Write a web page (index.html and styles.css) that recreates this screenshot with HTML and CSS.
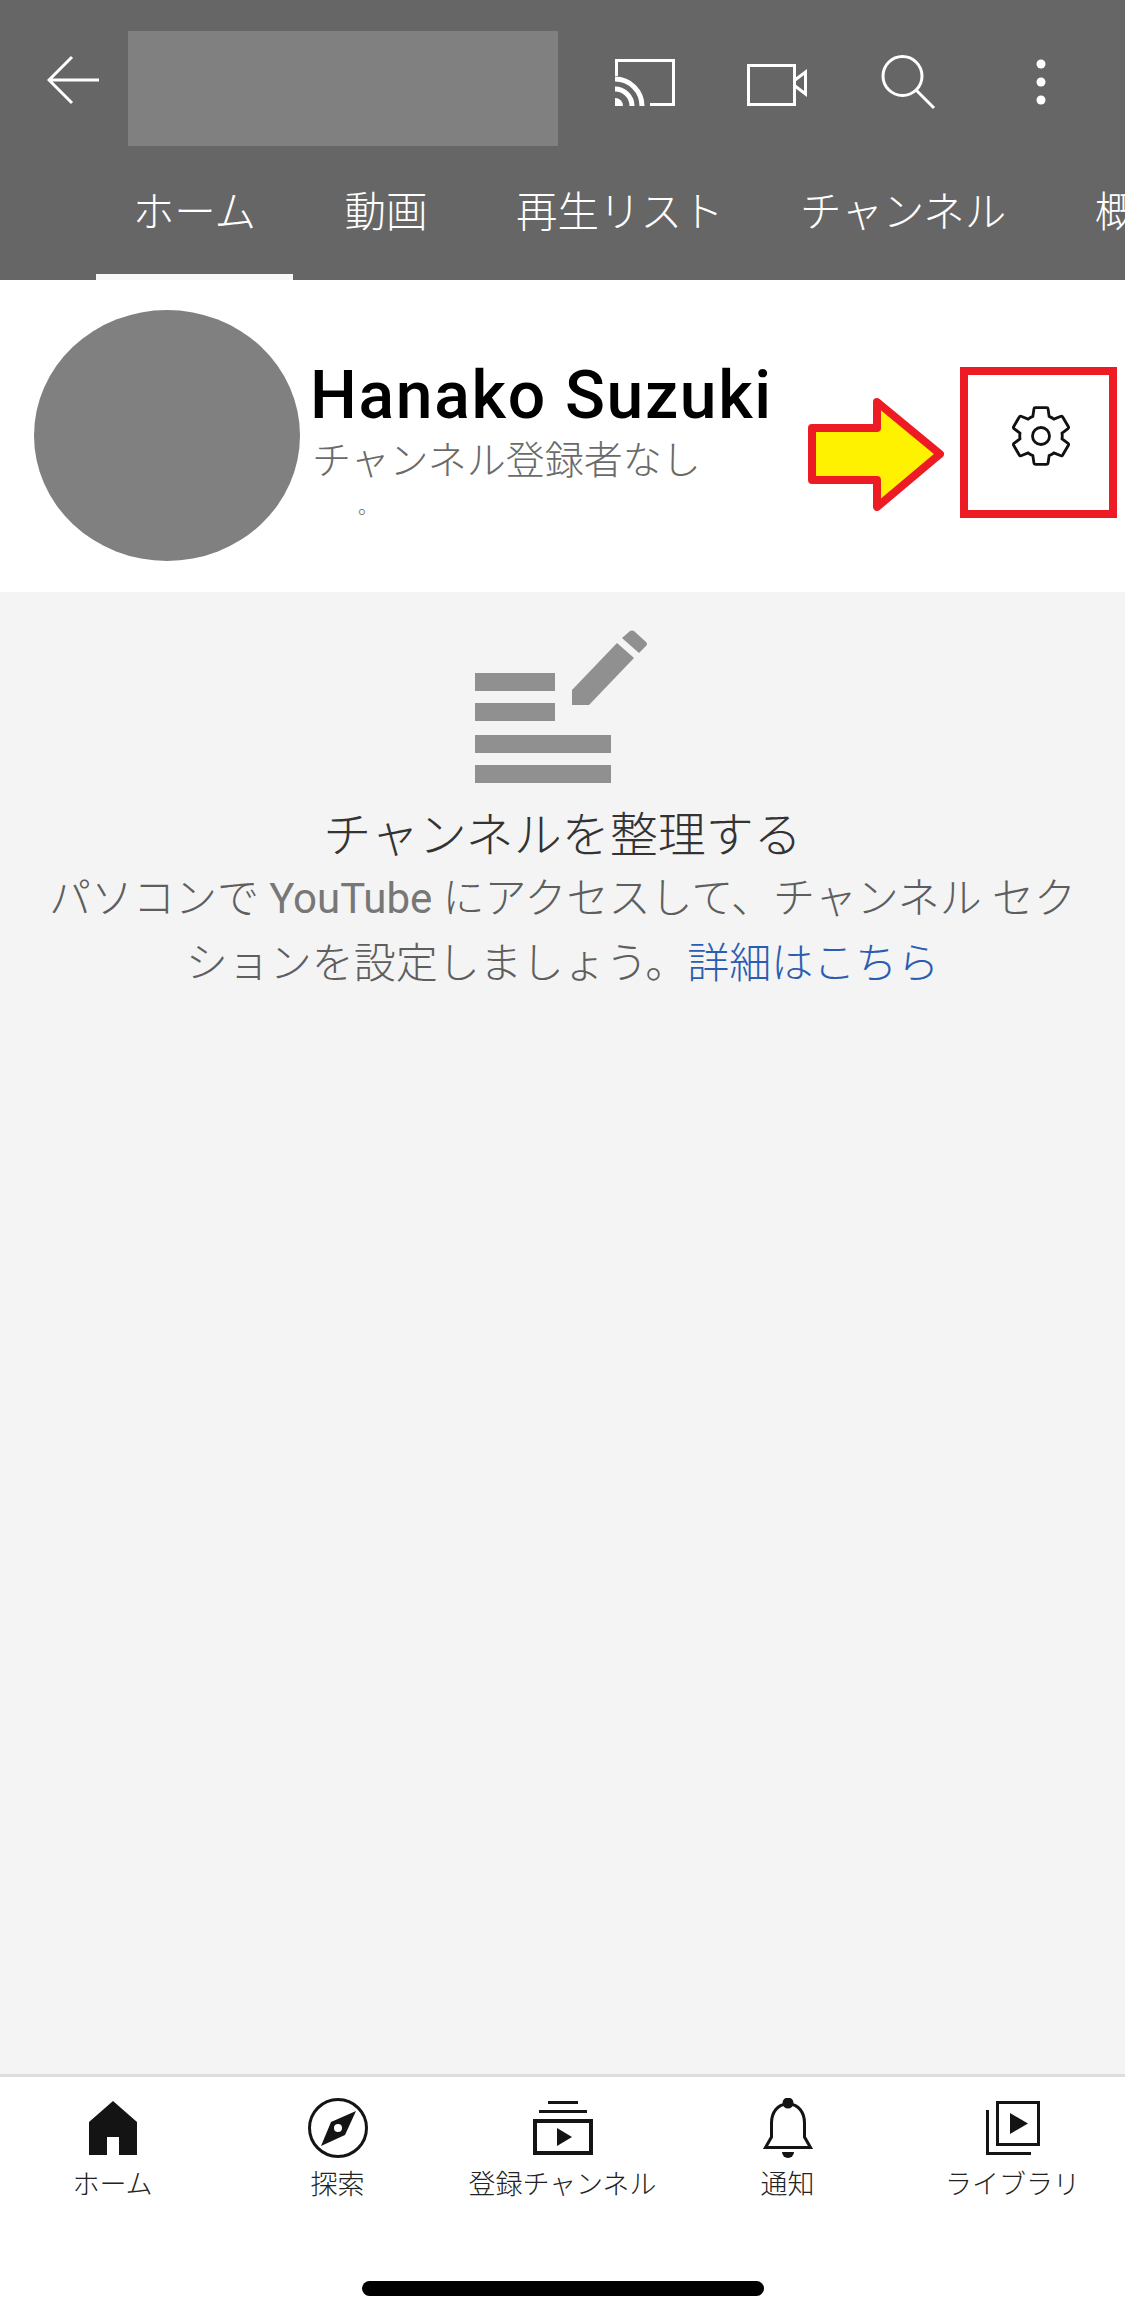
FILE: index.html
```html
<!DOCTYPE html>
<html lang="ja">
<head>
    <meta charset="UTF-8">
    <title>Hanako Suzuki</title>
    <link rel="stylesheet" href="styles.css">
</head>
<body>
    <header class="top">
        <div class="toolbar">
            <svg class="icon" viewBox="0 0 60 60"><path class="line" d="M52 28H2M25 5L2 28L25 51"/></svg>
            <div class="logo"></div>
            <div class="actions">
                <svg class="icon" viewBox="0 0 60 60">
                    <path class="line" d="M1.5 24V8.5H58.5V52.5H35"/>
                    <path class="line wave" d="M0 27A27 27 0 0 1 27 54M0 37A17 17 0 0 1 17 54"/>
                    <path class="solid" d="M0 46A8 8 0 0 1 8 54H0Z"/>
                </svg>
                <svg class="icon" viewBox="0 0 60 60">
                    <path class="line" d="M1.5 13.5H47.5V52.5H1.5ZM48 28L58.5 20V42L48 34"/>
                </svg>
                <svg class="icon" viewBox="0 0 60 60">
                    <circle class="line" cx="23.5" cy="24" r="19.5"/>
                    <path class="line" d="M37 38L55 56"/>
                </svg>
                <svg class="icon" viewBox="0 0 60 60">
                    <circle class="solid" cx="30" cy="12" r="4.5"/>
                    <circle class="solid" cx="30" cy="30" r="4.5"/>
                    <circle class="solid" cx="30" cy="48" r="4.5"/>
                </svg>
            </div>
        </div>
        <nav class="tabs">
            <div class="tab active">ホーム</div>
            <div class="tab">動画</div>
            <div class="tab">再生リスト</div>
            <div class="tab tab-tight">チャンネル</div>
            <div class="tab">概要</div>
        </nav>
    </header>

    <section class="channel">
        <div class="avatar"></div>
        <div class="channel-text">
            <div class="channel-name">Hanako Suzuki</div>
            <div class="channel-subs">チャンネル登録者なし</div>
            <div class="channel-dot">。</div>
        </div>
        <svg class="gear" viewBox="0 0 24 24">
            <path d="M19.43 12.98c.04-.32.07-.64.07-.98s-.03-.66-.07-.98l2.11-1.65c.19-.15.24-.42.12-.64l-2-3.46c-.12-.22-.39-.3-.61-.22l-2.49 1c-.52-.4-1.08-.73-1.69-.98l-.38-2.65C14.46 2.18 14.25 2 14 2h-4c-.25 0-.46.18-.49.42l-.38 2.65c-.61.25-1.17.59-1.69.98l-2.49-1c-.23-.09-.49 0-.61.22l-2 3.46c-.13.22-.07.49.12.64l2.11 1.65c-.04.32-.07.65-.07.98s.03.66.07.98l-2.11 1.65c-.19.15-.24.42-.12.64l2 3.46c.12.22.39.3.61.22l2.49-1c.52.4 1.08.73 1.69.98l.38 2.65c.03.24.24.42.49.42h4c.25 0 .46-.18.49-.42l.38-2.65c.61-.25 1.17-.59 1.69-.98l2.49 1c.23.09.49 0 .61-.22l2-3.46c.12-.22.07-.49-.12-.64l-2.11-1.65z"/>
            <circle cx="12" cy="12" r="3"/>
        </svg>
        <!-- annotation drawn on top of the screenshot -->
        <svg class="callout-arrow" viewBox="0 0 136 113"><path d="M4 30H69V4L132 56L69 109V82H4Z"/></svg>
        <div class="callout-box"></div>
    </section>

    <main class="empty">
        <svg class="empty-icon" viewBox="0 0 175 160">
            <rect x="0" y="48" width="80" height="18"/>
            <rect x="0" y="78" width="80" height="18"/>
            <rect x="0" y="110" width="136" height="18"/>
            <rect x="0" y="140" width="136" height="18"/>
            <path d="M97 65L142 18L159 33L114 80H97Z"/>
            <path d="M147 13L155 6Q157 5 159 6L171 17Q173 19 171 21L164 28Z"/>
        </svg>
        <h2 class="empty-title">チャンネルを整理する</h2>
        <p class="empty-text">パソコンで <span class="latin">YouTube</span> にアクセスして、チャンネル セク<br>ションを設定しましょう。<a href="#">詳細はこちら</a></p>
    </main>

    <footer class="bottom">
        <div class="nav-items">
            <div class="nav-item">
                <svg class="icon" viewBox="0 0 60 60"><path class="dark" d="M30 3L54 24V57H36V39H24V57H6V24Z"/></svg>
                <span>ホーム</span>
            </div>
            <div class="nav-item">
                <svg class="icon" viewBox="0 0 60 60">
                    <circle class="dark-line" cx="30" cy="30" r="28.5"/>
                    <path class="dark" d="M48 13L23 24L13 48L37 37Z"/>
                    <circle class="hole" cx="30" cy="30" r="4"/>
                </svg>
                <span>探索</span>
            </div>
            <div class="nav-item">
                <svg class="icon" viewBox="0 0 60 60">
                    <rect class="dark" x="15" y="3" width="30" height="3"/>
                    <rect class="dark" x="6" y="12" width="48" height="3"/>
                    <rect class="dark-line thick" x="2" y="23" width="56" height="32"/>
                    <path class="dark" d="M24 30L39 39L24 48Z"/>
                </svg>
                <span>登録チャンネル</span>
            </div>
            <div class="nav-item">
                <svg class="icon" viewBox="0 0 60 60">
                    <path class="dark-line" d="M30 6C19 6 13.5 15 13.5 25V39L7.5 49.5H52.5L46.5 39V25C46.5 15 41 6 30 6Z"/>
                    <circle class="dark" cx="30" cy="5" r="5.5"/>
                    <path class="dark" d="M24 54H36A6 6 0 0 1 24 54Z"/>
                </svg>
                <span>通知</span>
            </div>
            <div class="nav-item">
                <svg class="icon" viewBox="0 0 60 60">
                    <rect class="dark-line" x="14.5" y="4.5" width="41" height="42"/>
                    <path class="dark-line" d="M4.5 12V55.5H48"/>
                    <path class="dark" d="M27 15L45 25.5L27 36Z"/>
                </svg>
                <span>ライブラリ</span>
            </div>
        </div>
        <div class="home-bar"></div>
    </footer>
</body>
</html>
```

FILE: styles.css
```css
body {
    margin: 0;
    width: 1125px;
    height: 2319px;
    overflow: hidden;
    display: flex;
    flex-direction: column;
    background-color: #f4f4f4;
    font-family: Roboto, "Noto Sans CJK JP", sans-serif;
    font-weight: 300;
}
.icon {
    display: block;
    width: 60px;
    height: 60px;
    flex: none;
}
.line {
    fill: none;
    stroke: white;
    stroke-width: 3;
}
.wave {
    stroke-width: 5;
}
.solid {
    fill: white;
}

/* header */
.top {
    background-color: #666666;
    color: white;
    height: 280px;
    flex: none;
}
.toolbar {
    display: flex;
    align-items: center;
    height: 177px;
    padding-left: 47px;
}
.toolbar > .icon {
    margin-bottom: 13px;
}
.logo {
    width: 430px;
    height: 115px;
    margin-left: 21px;
    background-color: #808080;
}
.actions {
    display: flex;
    gap: 72px;
    margin-left: 57px;
    margin-bottom: 13px;
}
.tabs {
    display: flex;
    gap: 15px;
    margin-left: 96px;
    overflow: hidden;
}
.tab {
    box-sizing: border-box;
    height: 103px;
    padding: 0 36.75px;
    font-size: 41.5px;
    line-height: 72px;
    white-space: nowrap;
    border-bottom: 6px solid transparent;
}
.tab.active {
    border-bottom-color: #f8f8f8;
}
.tab-tight {
    margin-left: -12px;
}

/* channel */
.channel {
    position: relative;
    display: flex;
    align-items: center;
    height: 312px;
    flex: none;
    background-color: white;
}
.avatar {
    width: 266px;
    height: 251px;
    margin-left: 34px;
    margin-bottom: 1px;
    border-radius: 50%;
    background-color: #808080;
    flex: none;
}
.channel-text {
    align-self: flex-start;
    margin-left: 10px;
    padding-top: 81px;
}
.channel-name {
    font-weight: 500;
    font-size: 66px;
    line-height: 70px;
    letter-spacing: 1.7px;
    color: black;
}
.channel-subs {
    margin-left: 2px;
    font-size: 39px;
    line-height: 60px;
    color: #6a6a6a;
}
.channel-dot {
    margin-left: 48px;
    font-size: 20px;
    line-height: 32px;
    color: #6a6a6a;
}
.gear {
    width: 68px;
    height: 68px;
    margin-left: auto;
    margin-right: 50px;
    fill: none;
    stroke: #111111;
    stroke-width: 1;
}
.callout-arrow {
    position: absolute;
    left: 808px;
    top: 118px;
    width: 136px;
    height: 113px;
    fill: #fff200;
    stroke: #ed1c24;
    stroke-width: 8;
    stroke-linejoin: round;
}
.callout-box {
    position: absolute;
    left: 960px;
    top: 87px;
    width: 157px;
    height: 151px;
    box-sizing: border-box;
    border: 8px solid #ed1c24;
}

/* empty state */
.empty {
    flex: 1;
    padding-top: 33px;
    text-align: center;
}
.empty-icon {
    display: block;
    width: 175px;
    height: 160px;
    margin: 0 auto;
    fill: #909090;
}
.empty-title {
    margin: 21px 0 0;
    font-size: 48px;
    font-weight: 300;
    line-height: 60px;
    color: #333333;
}
.empty-text {
    margin: 0;
    font-size: 42px;
    line-height: 65px;
    color: #5e5e5e;
}
.latin {
    font-weight: 400;
    color: #777777;
}
.empty-text a {
    color: #2a5db0;
    text-decoration: none;
}

/* bottom nav */
.bottom {
    flex: none;
    height: 245px;
    box-sizing: border-box;
    border-top: 3px solid #dddddd;
    background-color: white;
    padding-top: 21px;
}
.nav-items {
    display: grid;
    grid-template-columns: repeat(5, 225px);
}
.nav-item {
    display: flex;
    flex-direction: column;
    align-items: center;
    font-size: 27px;
    line-height: 36px;
    color: #222222;
}
.nav-item span {
    margin-top: 9px;
    white-space: nowrap;
}
.dark {
    fill: #141414;
}
.dark-line {
    fill: none;
    stroke: #141414;
    stroke-width: 3;
}
.thick {
    stroke-width: 4;
}
.hole {
    fill: white;
}
.home-bar {
    width: 402px;
    height: 15px;
    margin: 78px auto 0;
    border-radius: 8px;
    background-color: black;
}
```
